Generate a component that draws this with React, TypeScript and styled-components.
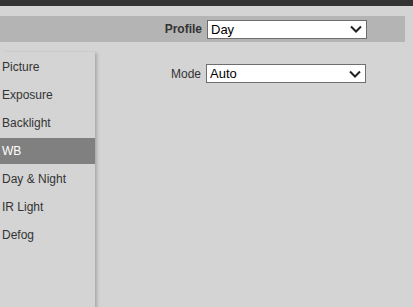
import styled, { createGlobalStyle } from "styled-components";

const GlobalStyle = createGlobalStyle`
  html, body {
    margin: 0;
    padding: 0;
    background: #d4d4d4;
    font-family: "Liberation Sans", Arial, sans-serif;
  }
`;

const Page = styled.div`
  width: 413px;
  height: 307px;
  background: #d4d4d4;
  overflow: hidden;
`;

const TopBar = styled.div`
  height: 6px;
  background: #333333;
`;

const HeaderBar = styled.div`
  margin-top: 10px;
  width: 405px;
  height: 26px;
  background: #b4b4b4;
  display: flex;
  align-items: center;
  justify-content: flex-end;
  padding-right: 38px;
  box-sizing: border-box;
`;

const Field = styled.label<{ bold?: boolean }>`
  display: flex;
  align-items: center;
  gap: 5px;
  font-size: 12px;
  color: #333333;
  font-weight: ${p => (p.bold ? 700 : 400)};
`;

const SelectBox = styled.div`
  width: 160px;
  height: 19px;
  box-sizing: border-box;
  background: #ffffff;
  border: 1px solid #6e6e6e;
  display: flex;
  align-items: center;
  justify-content: space-between;
  padding: 0 4px 0 3px;
  font-size: 13px;
  font-weight: 400;
  color: #000000;
`;

const Body = styled.div`
  display: flex;
  margin-top: 10px;
`;

const Sidebar = styled.nav`
  width: 95px;
  height: 260px;
  box-shadow: 3px 0 3px -1px #a8a8a8;
  display: flex;
  flex-direction: column;
  gap: 2px;
  padding-top: 2px;
`;

const NavItem = styled.div<{ active?: boolean }>`
  height: 26px;
  display: flex;
  align-items: center;
  padding-left: 2px;
  font-size: 12px;
  color: ${p => (p.active ? "#ffffff" : "#333333")};
  background: ${p => (p.active ? "#808080" : "transparent")};
`;

const Content = styled.div`
  flex: 1;
  padding-top: 12px;
  padding-left: 76px;
`;

const Chevron = () => (
  <svg width="12" height="8" viewBox="0 0 12 8">
    <path d="M1 1.5 L6 6.5 L11 1.5" stroke="#222" strokeWidth="2" fill="none" />
  </svg>
);

const Select = ({ value }: { value: string }) => (
  <SelectBox>
    <span>{value}</span>
    <Chevron />
  </SelectBox>
);

const items = ["Picture", "Exposure", "Backlight", "WB", "Day & Night", "IR Light", "Defog"];

export default function App() {
  return (
    <Page>
      <GlobalStyle />
      <TopBar />
      <HeaderBar>
        <Field bold>
          Profile
          <Select value="Day" />
        </Field>
      </HeaderBar>
      <Body>
        <Sidebar>
          {items.map(item => (
            <NavItem key={item} active={item === "WB"}>
              {item}
            </NavItem>
          ))}
        </Sidebar>
        <Content>
          <Field>
            Mode
            <Select value="Auto" />
          </Field>
        </Content>
      </Body>
    </Page>
  );
}
